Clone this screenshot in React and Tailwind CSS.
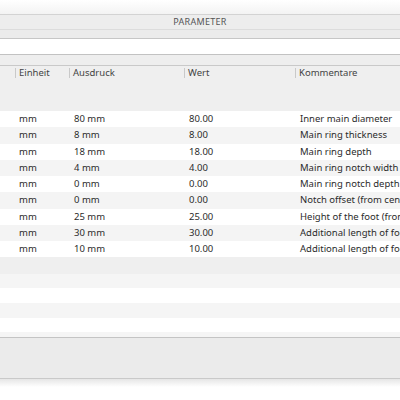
import React from 'react';

const ROWS = [
  ['mm', '80 mm', '80.00', 'Inner main diameter'],
  ['mm', '8 mm', '8.00', 'Main ring thickness'],
  ['mm', '18 mm', '18.00', 'Main ring depth'],
  ['mm', '4 mm', '4.00', 'Main ring notch width'],
  ['mm', '0 mm', '0.00', 'Main ring notch depth'],
  ['mm', '0 mm', '0.00', 'Notch offset (from center)'],
  ['mm', '25 mm', '25.00', 'Height of the foot (from base)'],
  ['mm', '30 mm', '30.00', 'Additional length of foot'],
  ['mm', '10 mm', '10.00', 'Additional length of foot'],
];

// column widths: hidden name col, Einheit, Ausdruck, Wert, Kommentare
const COLS = ['w-[15px]', 'w-[54px]', 'w-[115px]', 'w-[111px]', 'flex-1'];

function HeaderCell({ label, width, first }) {
  return (
    <div className={`${width} shrink-0 flex items-center h-full min-w-0`}>
      {!first && <div className="w-px h-[10px] bg-[#c9c9c9]" />}
      <span className="pl-[3px] whitespace-nowrap">{label}</span>
    </div>
  );
}

export default function App() {
  return (
    <div
      className="w-[400px] h-[400px] bg-white overflow-hidden flex flex-col text-[9.5px] text-[#2b2b2b]"
      style={{ fontFamily: '"Noto Sans", "Open Sans", sans-serif' }}
    >
      {/* window top */}
      <div className="h-[14px] shrink-0 bg-gradient-to-b from-white to-[#f3f3f3]" />

      {/* title bar */}
      <div className="h-[15px] shrink-0 border-t border-[#d3d3d3] bg-[#ededed] flex items-center justify-center text-[9px] tracking-[0.3px] text-[#555]">
        PARAMETER
      </div>
      <div className="h-[10px] shrink-0 border-t border-[#dcdcdc] border-b border-b-[#c6c6c6] bg-[#ebebeb]" />

      {/* filter input */}
      <div className="h-[16px] shrink-0 bg-white border-b border-[#c2c2c2]" />
      <div className="h-[11px] shrink-0 bg-[#eeeeee] border-b border-[#c9c9c9]" />

      {/* table header */}
      <div className="h-[14px] shrink-0 bg-[#efefef] flex text-[#444]">
        <HeaderCell label="" width={COLS[0]} first />
        <HeaderCell label="Einheit" width={COLS[1]} />
        <HeaderCell label="Ausdruck" width={COLS[2]} />
        <HeaderCell label="Wert" width={COLS[3]} />
        <HeaderCell label="Kommentare" width={COLS[4]} />
      </div>
      <div className="h-[31px] shrink-0 bg-[#efefef]" />

      {/* rows */}
      {ROWS.map((r, i) => (
        <div
          key={i}
          className={`h-[16.25px] shrink-0 flex items-center ${i % 2 === 0 ? 'bg-white' : 'bg-[#f4f4f4]'}`}
        >
          <div className={`${COLS[0]} shrink-0`} />
          <div className={`${COLS[1]} shrink-0 pl-[4px]`}>{r[0]}</div>
          <div className={`${COLS[2]} shrink-0 pl-[5px]`}>{r[1]}</div>
          <div className={`${COLS[3]} shrink-0 pl-[5px]`}>{r[2]}</div>
          <div className={`${COLS[4]} pl-[5px] whitespace-nowrap overflow-hidden`}>{r[3]}</div>
        </div>
      ))}

      {/* empty rows */}
      <div className="h-[17px] shrink-0 bg-[#efefef]" />
      <div className="h-[14px] shrink-0 bg-[#f5f5f5]" />
      <div className="h-[15px] shrink-0 bg-white" />
      <div className="h-[15px] shrink-0 bg-[#f5f5f5]" />
      <div className="h-[14px] shrink-0 bg-white" />
      <div className="h-[5px] shrink-0 bg-[#f5f5f5]" />

      {/* bottom panel */}
      <div className="h-[42px] shrink-0 border-t border-[#c4c4c4] border-b border-b-[#c9c9c9] bg-[#ebebeb]" />
      <div className="h-[8px] shrink-0 bg-gradient-to-b from-[#e6e6e6] to-white" />
      <div className="flex-1 bg-white" />
    </div>
  );
}
